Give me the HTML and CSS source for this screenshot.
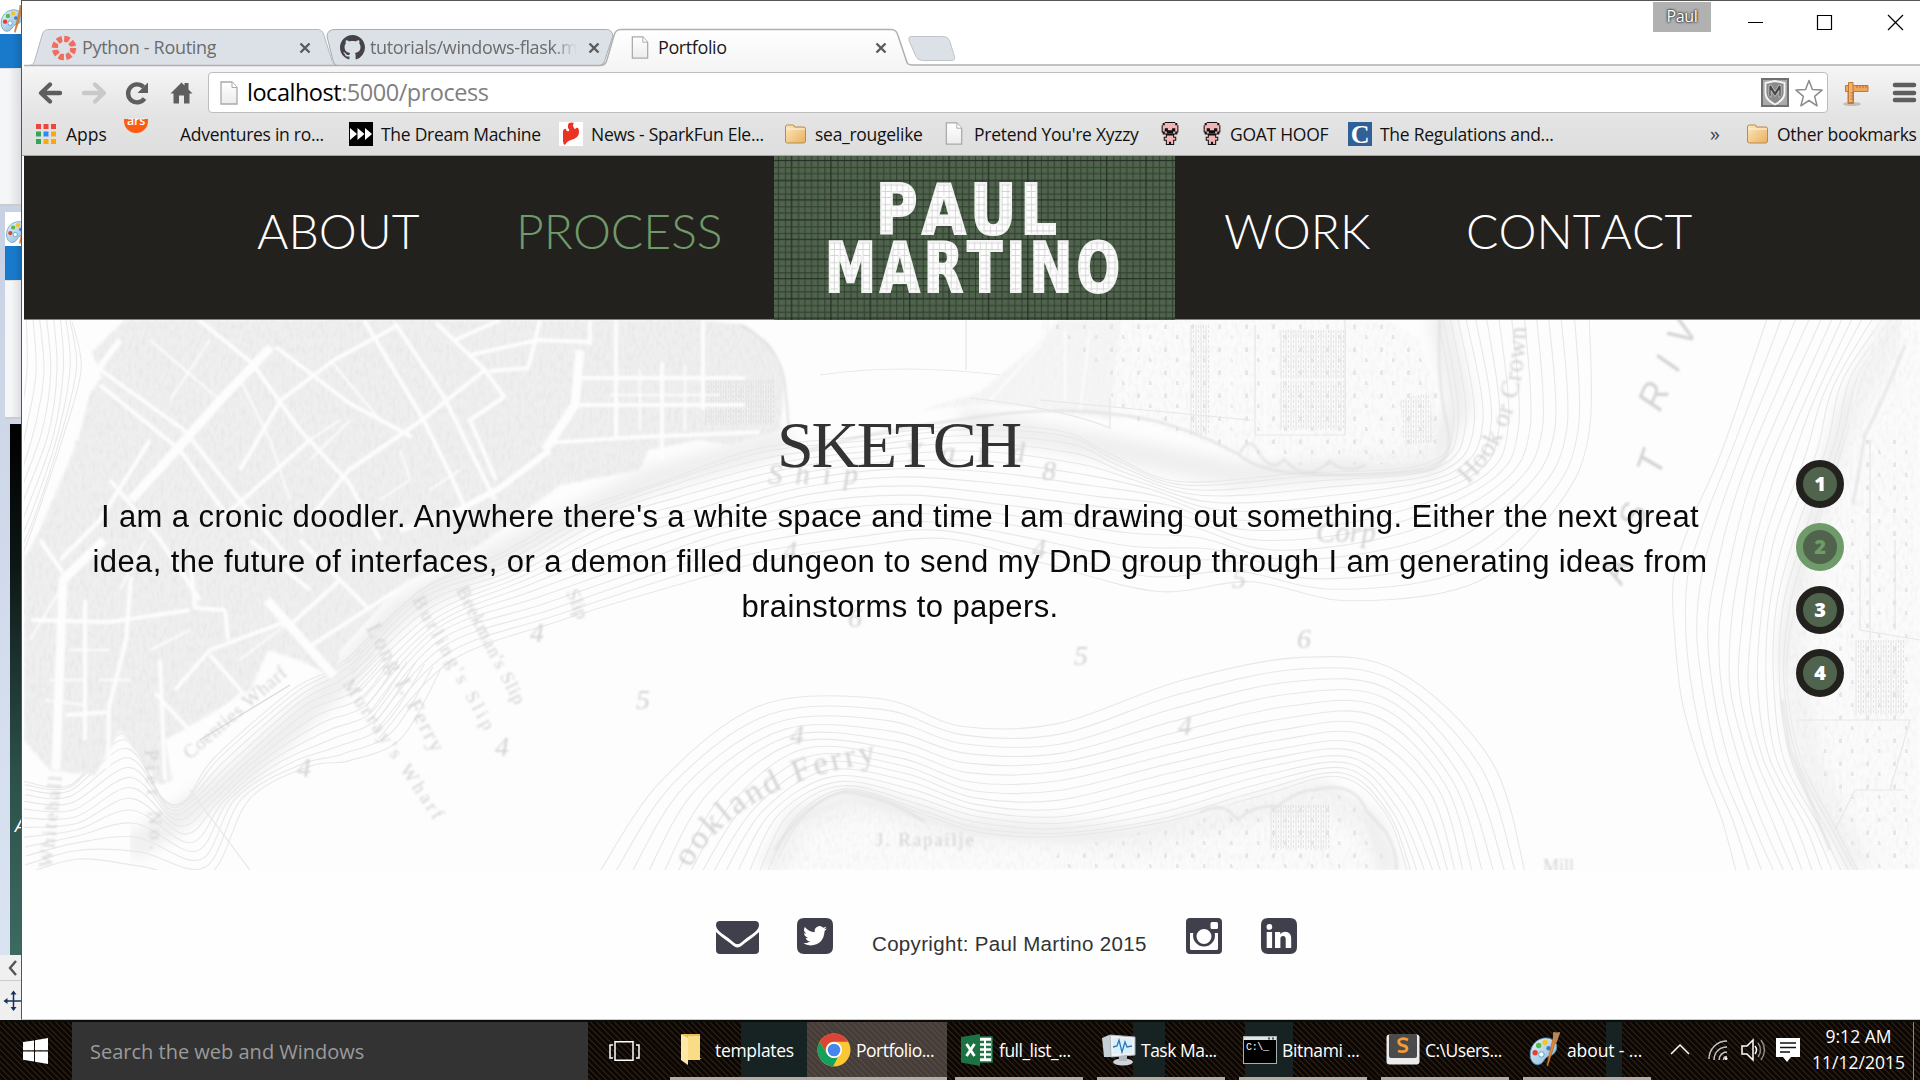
FILE: index.html
```html
<!DOCTYPE html>
<html lang="en">
<head>
<meta charset="utf-8">
<title>Portfolio</title>
<link rel="stylesheet" href="styles.css">
</head>
<body>
<svg class="defs" width="0" height="0" aria-hidden="true">
  <defs>
    <linearGradient id="gFolder" x1="0" y1="0" x2="1" y2="1"><stop offset="0" stop-color="#fde9bb"/><stop offset="1" stop-color="#e9b063"/></linearGradient>
    <linearGradient id="gPage" x1="0" y1="0" x2="0" y2="1"><stop offset="0" stop-color="#fff"/><stop offset="1" stop-color="#ececec"/></linearGradient>
    <linearGradient id="gTab" x1="0" y1="0" x2="0" y2="1"><stop offset="0" stop-color="#fff"/><stop offset="1" stop-color="#f5f5f5"/></linearGradient>
    <linearGradient id="gPal" x1="0" y1="0" x2="1" y2="1"><stop offset="0" stop-color="#e9f5fc"/><stop offset="1" stop-color="#7fb4d6"/></linearGradient>
    <symbol id="page" viewBox="0 0 18 24"><path d="M1 1h11l5 5.5V23H1z" fill="url(#gPage)" stroke="#a9a9a9" stroke-width="1.3"/><path d="M12 1v5.500h5" fill="#fff" stroke="#a9a9a9"/></symbol>
    <symbol id="folder" viewBox="0 0 23 20"><path d="M1.500 3q0-2 2-2h5q2 0 2 2h9q2 0 2 2v12q0 2-2 2h-16q-2 0-2-2z" fill="url(#gFolder)" stroke="#b98b45"/><path d="M2 5h19" stroke="#fff3d6"/></symbol>
    <symbol id="cross" viewBox="0 0 12 12"><path d="M1.500 1.500l9 9M10.500 1.500l-9 9" stroke="currentColor" stroke-width="2.400"/></symbol>
    <symbol id="isaac" viewBox="0 0 18 22"><path d="M4 0h10v1h2v2h1v7h-1v2h-3v2h2v4h-2v4H5v-4H3v-4h2v-2H2v-2H1V3h1V1h2z" fill="#111"/><path d="M4 1h10v2h2v6h-2v2H4V9H2V3h2z" fill="#f3b4b6"/><path d="M4 6h3v2h4V6h3v3h-2v2H6V9H4z" fill="#111"/><path d="M6 13h6v2h2v2h-2v4h-2v-2H8v2H6v-4H4v-2h2z" fill="#f3b4b6"/></symbol>
    <symbol id="palette" viewBox="0 0 36 40"><path d="M16 7C5 9 0 20 2 29c2 8 9 9 13 5 3-3 3-6 7-7 6-1 9-6 9-11 0-6-8-11-15-9z" fill="url(#gPal)" stroke="#5792b8"/><circle cx="11" cy="15" r="3" fill="#57b947"/><circle cx="18" cy="11.500" r="3" fill="#f7c31e"/><circle cx="7" cy="23" r="3" fill="#dc4334"/><circle cx="14" cy="25" r="3" fill="#fff" stroke="#5792b8"/><circle cx="22" cy="18" r="2.500" fill="#3f78c9"/><path d="M33 2l-5 14-7 22-1-1 5-22 3-13z" fill="#e4862c" stroke="#a35a17" stroke-width=".6"/><path d="M27 0q5 1 8 0l-4 12-4-1z" fill="#b98755"/></symbol>
  </defs>
</svg>

<div class="desktop">
  <aside class="behind">
    <div class="b-title"><svg class="pal-back" width="26" height="29"><use href="#palette"/></svg></div>
    <div class="b-ribbon"></div>
    <div class="b-body"></div>
    <div class="b-inner">
      <div class="b-title small"><svg class="pal-in" width="26" height="28"><use href="#palette"/></svg></div>
      <div class="b-ribbon"></div>
      <div class="b-body short"></div>
    </div>
    <div class="b-canvas"><span>A</span></div>
    <div class="b-scroll"><svg width="22" height="25"><path d="M16 6l-6 7 6 7" fill="none" stroke="#555" stroke-width="2.400"/></svg></div>
    <div class="b-status"><svg width="22" height="39"><path d="M5 20h18M13.500 11v18" stroke="#16305c" stroke-width="1.500"/><path d="M3.500 20l4-3v6zM13.500 9.500l-3 4h6zM13.500 30l-3-4h6z" fill="#16305c"/></svg></div>
  </aside>

  <section class="browser">
    <div class="tabstrip">
      <svg class="tabshapes" width="1898" height="68" viewBox="22 0 1898 68">
        <path d="M24 65.500h5c4 0 5-3 6-6l7-24c1-4 3-6 7-6h268c4 0 6 2 7 6l8 25c1 3 2 5 6 5" fill="#dce1e8" stroke="#b4b7bb"/>
        <path d="M337 65.500q-3-1-4-5l-6-24q0-7 8-7h271c4 0 6 2 7 6l-8 24c-1 4-3 6-7 6z" fill="#dce1e8" stroke="#a9adb3"/>
        <path d="M24 68v-2.500h576c4 0 6-2 7-6l7-24c1-4 3-6 7-6h270c4 0 6 2 7 6l8 24c1 4 2 5 6 5H1920V68z" fill="url(#gTab)"/>
        <path d="M24 65.500h576c4 0 6-2 7-6l7-24c1-4 3-6 7-6h270c4 0 6 2 7 6l8 24c1 4 2 5.500 6 5.500H1920" fill="none" stroke="#b0b0b0" stroke-width="1.500"/>
        <path d="M911 36.500h32q5 0 6.500 4l5 16q1 4-3 4h-29q-5 0-6.500-4l-7-16q-1-4 2-4z" fill="#dce1e8" stroke="#c0c4c9"/>
      </svg>
      <div class="tabs">
        <div class="tab t1"><svg width="26" height="26" viewBox="0 0 26 26"><circle cx="13" cy="13" r="9.500" fill="none" stroke="#ee6e62" stroke-width="5.500" stroke-dasharray="5.200 2.260"/><circle cx="13" cy="13" r="7.500" fill="none" stroke="#ee6e62" stroke-width="3" stroke-dasharray="3 2.890"/></svg><span class="tt">Python - Routing</span><svg class="x" width="12" height="12"><use href="#cross"/></svg></div>
        <div class="tab t2"><svg width="25" height="25" viewBox="0 0 16 16"><path fill="#464348" d="M8 0C3.580 0 0 3.580 0 8c0 3.540 2.290 6.530 5.470 7.590.4.070.55-.17.55-.38 0-.19-.01-.82-.01-1.490-2.010.37-2.530-.49-2.690-.94-.09-.23-.48-.94-.82-1.130-.28-.15-.68-.52-.01-.53.63-.01 1.080.58 1.230.82.72 1.210 1.870.87 2.330.66.07-.52.28-.87.51-1.070-1.780-.2-3.640-.89-3.640-3.950 0-.87.31-1.590.82-2.150-.08-.2-.36-1.020.08-2.120 0 0 .67-.21 2.200.82.64-.18 1.320-.27 2-.27s1.360.09 2 .27c1.530-1.040 2.200-.82 2.200-.82.44 1.100.16 1.920.08 2.120.51.56.82 1.270.82 2.150 0 3.070-1.870 3.750-3.650 3.950.29.25.54.73.54 1.480 0 1.070-.01 1.930-.01 2.200 0 .21.15.46.55.38A8.010 8.010 0 0 0 16 8c0-4.420-3.580-8-8-8z"/></svg><span class="tt fade">tutorials/windows-flask.md</span><svg class="x" width="12" height="12"><use href="#cross"/></svg></div>
        <div class="tab t3"><svg width="18" height="23"><use href="#page"/></svg><span class="tt">Portfolio</span><svg class="x" width="12" height="12"><use href="#cross"/></svg></div>
      </div>
      <div class="winctl"><span class="user">Paul</span><svg width="209" height="44" viewBox="1711 1 209 44"><path d="M1748 22.500h15M1817.500 15.500h14v14h-14zM1888 15l15 15M1903 15l-15 15" fill="none" stroke="#000" stroke-width="1.200"/></svg></div>
    </div>

    <div class="toolbar">
      <svg class="navicons" width="186" height="46" viewBox="22 70 186 46" fill="none" stroke="#5e5e5e" stroke-width="4.400" stroke-linejoin="round" stroke-linecap="round">
        <path d="M60 93H42M50 84.500L41 93l9 8.500"/><path d="M84 93h18M95 84.500l9 8.500-9 8.500" stroke="#c9c9c9"/>
        <path d="M144.500 98.500a9 9 0 1 1-1-11.500" stroke-linecap="butt"/><path d="M148 82.500v10.500h-10.500z" fill="#5e5e5e" stroke="none"/>
        <path d="M170.500 93.500L181.500 82.500l3 3v-2.500h4v6.500l4 4h-3V103.500h-5.500v-8h-5v8h-5.500V93.500z" fill="#5e5e5e" stroke="none"/>
      </svg>
      <div class="omnibox"><svg width="18" height="24"><use href="#page"/></svg><span class="url"><b>localhost</b>:5000/process</span>
        <svg class="omni-r" width="64" height="32" viewBox="1760 77 64 32"><path d="M1761 78h28v29h-28z" fill="#707070"/><path d="M1763 80h24v25h-24z" fill="#a9a9a9"/><path d="M1765.500 83l9.500-2 9.500 2v10c0 6-5 9-9.500 11.500-4.500-2.500-9.500-5.500-9.500-11.500z" fill="#8a8a8a" stroke="#f4f4f4" stroke-width="1.800"/><path d="M1769 85.500v10l2 2v-7l4 6 4-6v7l2-2v-10l-2-.5-4 6.500-4-6.500z" fill="#444" stroke="#eee" stroke-width=".6"/><path d="M1809 80.500l3.400 9 9.600.6-7.400 6.300 2.500 9.400-8.100-5.300-8.100 5.300 2.500-9.400-7.400-6.300 9.600-.6z" fill="#fff" stroke="#8c8c8c" stroke-width="1.500" stroke-linejoin="round"/></svg>
      </div>
      <svg width="92" height="46" viewBox="1828 70 92 46"><ellipse cx="1852" cy="104" rx="9" ry="2" fill="#c4bdb5"/><path d="M1845.500 85.500h22.500v6h-14.500v12h-5.500v-12h-2.500z" fill="#eea55c" stroke="#c27936"/><path d="M1848.500 82.500h4.500v20h-4.500z" fill="#f3b26e" stroke="#c27936"/><path d="M1857 85v3M1860 85v3M1863 85v3M1866 85v3M1850.500 93h3M1850.500 96h3M1850.500 99h3" stroke="#a5642b" stroke-width=".8"/><path d="M1895 85h19M1895 93h19M1895 100h19" stroke="#5e5e5e" stroke-width="4.600" stroke-linecap="round"/></svg>
    </div>

    <div class="bookmarks">
      <div class="bm" style="width:88px"><svg width="21" height="20" viewBox="0 0 21 20"><path d="M0 0h5v5H0zM7.500 0h5v5h-5zM15 0h5v5h-5z" fill="#ee453c"/><path d="M0 7.500h5v5H0zM0 15h5v5H0z" fill="#34a457"/><path d="M7.500 7.500h5v5h-5z" fill="#2a8bf2"/><path d="M15 7.500h5v5h-5zM7.500 15h5v5h-5zM15 15h5v5h-5z" fill="#fba90a"/></svg><span class="apps">Apps</span></div>
      <div class="bm ars" style="width:56px"><svg width="24" height="36" viewBox="0 3 24 36"><path d="M0 7h24v2a12 12 0 0 1-24 0z" fill="#ff5a12"/><text x="12" y="13" text-anchor="middle" font-family="Open Sans" font-weight="600" font-size="12.500" fill="#fff">ars</text><path d="M0 0h24v6.500H0z" fill="#e2e2e2"/></svg></div>
      <div class="bm" style="width:169px"><span>Adventures in ro...</span></div>
      <div class="bm" style="width:210px"><svg width="24" height="24" viewBox="0 0 24 24"><path d="M0 0h24v24H0z"/><path d="M1 6l7 6-7 6zM8.500 6l7 6-7 6zM16 6l7 6-7 6z" fill="#fff"/></svg><span>The Dream Machine</span></div>
      <div class="bm" style="width:225px"><svg width="24" height="24" viewBox="0 0 24 24"><path d="M0 0h24v24H0z" fill="#fff"/><path d="M10 1q3-1 5 0-2 2 0 5 1 2 2 0 3-1 3 4 0 6-8 8-4 1-6 5-2-1-2-4V9q1-3 3-2 0 3 3 2 1-1-1-3-1-3 1-5z" fill="#ea3323"/></svg><span>News - SparkFun Ele...</span></div>
      <div class="bm" style="width:161px"><svg width="23" height="20"><use href="#folder"/></svg><span>sea_rougelike</span></div>
      <div class="bm" style="width:215px"><svg width="18" height="23"><use href="#page"/></svg><span class="wide">Pretend You're Xyzzy</span></div>
      <div class="bm" style="width:42px"><svg width="20" height="23"><use href="#isaac"/></svg></div>
      <div class="bm" style="width:146px"><svg width="20" height="23"><use href="#isaac"/></svg><span>GOAT HOOF</span></div>
      <div class="bm" style="width:362px"><svg width="24" height="24" viewBox="0 0 24 24"><path d="M0 0h24v24H0z" fill="#2f6196"/><text x="12" y="21" text-anchor="middle" font-family="Liberation Serif" font-weight="700" font-size="26" fill="#fff">C</text></svg><span>The Regulations and...</span></div>
      <div class="bm more" style="width:36px">»</div>
      <div class="bm"><svg width="23" height="20"><use href="#folder"/></svg><span>Other bookmarks</span></div>
    </div>

    <div class="site">
      <nav class="nav">
        <a class="n1">ABOUT</a><a class="n2 on">PROCESS</a>
        <svg class="logo" width="401" height="164" viewBox="774 156 401 164">
          <defs>
            <pattern id="grid" x="774" y="156" width="39.400" height="39.400" patternUnits="userSpaceOnUse"><path d="M4.500 0v40M11.500 0v40M17.500 0v40M24.500 0v40M31 0v40M37.500 0v40M0 4.500h40M0 11.500h40M0 17.500h40M0 24.500h40M0 31.500h40M0 38h40" stroke="#2b3a2b" stroke-width="1.200" opacity=".8"/><path d="M17.500 0v40M0 4.500h40M0 24.500h40" stroke="#1f2820" stroke-width=".8"/></pattern>
            <pattern id="gridLight" x="774" y="156" width="39.400" height="39.400" patternUnits="userSpaceOnUse"><path d="M0 0h40v40H0z" fill="#fff"/><path d="M4.500 0v40M11.500 0v40M17.500 0v40M24.500 0v40M31 0v40M37.500 0v40M0 4.500h40M0 11.500h40M0 17.500h40M0 24.500h40M0 31.500h40M0 38h40" stroke="#d3d3d3" stroke-width="1"/></pattern>
          </defs>
          <path d="M774 156h401v164H774z" fill="#50644d"/><path d="M774 156h401v164H774z" fill="url(#grid)"/>
          <g font-family="DejaVu Sans Condensed, DejaVu Sans" font-stretch="condensed" font-weight="700" font-size="70" fill="url(#gridLight)" stroke="#f3f3f3" stroke-width="2.200">
            <text transform="translate(876 234) scale(.89 1)" letter-spacing="5" textLength="208" lengthAdjust="spacingAndGlyphs">PAUL</text>
            <text transform="translate(825 292) scale(.89 1)" letter-spacing="5" textLength="336" lengthAdjust="spacingAndGlyphs">MARTINO</text>
          </g>
        </svg>
        <a class="n3">WORK</a><a class="n4">CONTACT</a>
      </nav>

      <main class="hero">
        <svg class="map" id="map" width="1896" height="550" viewBox="24 320 1896 550" aria-hidden="true">
          <defs>
            <pattern id="hatch" width="5" height="5" patternUnits="userSpaceOnUse"><path d="M1 0v5M3.500 0v3" stroke="#dedede" stroke-width=".8"/></pattern>
            <pattern id="rows" width="27" height="23" patternUnits="userSpaceOnUse"><path d="M3 3l3-1v5H3zM15 13h2l1 4h-3z" fill="#e6e6e6"/></pattern>
            <filter id="soft"><feGaussianBlur stdDeviation=".8"/></filter>
            <filter id="edge" x="0" y="0" width="100%" height="100%"><feGaussianBlur stdDeviation="7"/></filter>
            <filter id="grain" x="0" y="0" width="100%" height="100%"><feGaussianBlur in="SourceGraphic" stdDeviation="1.500" result="s"/><feTurbulence type="fractalNoise" baseFrequency=".28 .13" numOctaves="3" seed="4" result="n"/><feColorMatrix in="n" values="0 0 0 0 .76  0 0 0 0 .76  0 0 0 0 .76  1.300 0 0 0 -.53" result="m"/><feComposite in="m" in2="s" operator="in" result="c"/><feMerge><feMergeNode in="s"/><feMergeNode in="c"/></feMerge></filter>
          </defs>
          <g fill="none" stroke="#efefef" stroke-width="26" filter="url(#edge)">
            <path d="M130 850L240 775 330 690 400 610 500 555 650 480 790 440M960 420l160 30 120 25 190-12 30-60-20-90M1900 320l-50 90-40 130-20 110 20 120 50 100M770 870l30-50 60-20 100 30 180 8 180-44 50 30 20 50"/>
          </g>
          <g id="contours" fill="none" stroke="#e8e8e8" stroke-width="1.100" stroke-linejoin="round"></g>
          <g filter="url(#grain)">
            <path id="city" d="M125 320L92 352 102 378 84 400 74 450 40 530 24 560V740L50 770 95 775 120 730 160 785 172 780 165 740 200 720 250 690 268 650 300 660 335 678 340 650 400 585 480 545 540 500 560 485 640 470 648 450 700 440 730 445 780 430 785 380 770 345 745 325 700 320z" fill="#efefef"/>
          </g>
          <g filter="url(#grain)" opacity=".55">
            <path d="M1040 320h350l30 20 20 60-5 60-60 5-30-12-40 8-30-12-30 12-50-22-60-20-80-4z" fill="#fafafa"/>
            <path d="M920 410l60-18 60-50 20-22 60 0-10 100-70-12-60-4z" fill="#f0f0f0"/>
            <path d="M1920 320v550h-60l-24-46-36-64-14-70 8-90 26-80 24-70 10-60 24-70z" fill="#fafafa"/>
            <path d="M770 870l30-46 50-22 60 16 70 20 90 8 90-14 60-26 50-10 40-10 50 24 20 60z" fill="#fafafa"/>
          </g>
          <path d="M1040 320h350l30 20 20 60-5 60-60 5-80 0-160-44z" fill="url(#rows)"/>
          <path d="M1860 440h60v430h-60l-40-100z" fill="url(#rows)"/>
          <path d="M1060 850l180-40 110-20 40 80h-340z" fill="url(#rows)"/>
          <path d="M1280 330h66v100h-66zM1190 325h20v110h-20zM1855 640h50v75h-50zM705 380h70v45h-70zM1400 400l30-8 4 50-30 4zM1270 805h60v45h-60z" fill="url(#hatch)"/>
          <g fill="none" stroke="#fdfdfd" stroke-linejoin="round" filter="url(#soft)">
            <g stroke-width="9"><path d="M271 347L223 397 179 447 131 500"/><path d="M104 540L63 580 56 770"/><path d="M267 600L334 676"/><path d="M580 350L575 405 545 450"/></g>
            <g stroke-width="6"><path d="M550 450L500 488 455 512 400 530"/><path d="M75 440L90 380 120 340"/></g>
            <g stroke-width="4"><path d="M199 320L252 363 300 430 349 483 380 540"/><path d="M364 320L422 417 453 480 470 520"/><path d="M395 323L444 397 480 470 495 500"/><path d="M436 323L485 370 504 397 470 420 496 480"/><path d="M395 327L334 360 281 400 240 470"/><path d="M276 347L349 403 412 437"/><path d="M485 370L422 420 349 470 300 530"/><path d="M87 360L184 430 240 500 290 560"/><path d="M100 385L180 450 230 520"/><path d="M540 320L534 345 528 368 490 371"/><path d="M455 340L500 320M470 355L538 340 590 342M590 320V345"/><path d="M616 320V440M662 362V460M703 320V410M580 378H745M580 405H745M545 443L640 437 760 432"/><path d="M131 577L126 640 109 707 108 770"/><path d="M32 620L110 622 190 610M63 573L40 540M66 715L110 712"/><path d="M290 620L210 650 175 690M397 590L312 645M340 580L290 625M300 540L370 610"/><path d="M155 693L194 735 243 693 210 655"/><path d="M190 555L195 608 225 610 228 640M85 600V740M160 660L165 780"/><path d="M250 540L310 590M220 520L310 440M150 440L100 520 60 560M110 480L160 540 200 600"/></g>
            <g stroke-width="2"><path d="M240 660L285 625M340 420L310 440M150 340L220 400M210 340L170 400M240 380L270 440 290 500M330 360L380 420M310 460L350 420M380 500L410 480 400 450M430 490L460 470M640 370V430M685 365V430M610 395H720M1040 345L990 400M1065 330V400M1090 330L1080 410M1230 320V440M1265 320V450M1210 380H1345"/><path d="M60 590L30 640M70 650H110M100 680H130M145 540L120 590M190 630L150 650M50 680H85M45 700L85 705"/></g>
          </g>
          <g fill="none" stroke="#e0e0e0" stroke-width="2.500" filter="url(#soft)" opacity=".8"><path d="M740 325q40 20 45 60l4 45M1240 453q10-20 20 2 14 18 24 4 22 26 46 2 14 14 36 4"/><path d="M1440 320q-4 60 8 110 6 30-20 40-60 8-120 4-50-2-70-20-60-32-110-38-80-12-170 4-80 10-150 30"/><path d="M1200 812q14-8 28-2l10 10q12-14 40-14 20-16 36-16 40-10 52 20l20 22q12 22 10 38"/><path d="M775 850q30-50 70-58 40 4 80 30"/><path d="M1905 345q-24 60-40 90l-12 70M1830 850l-40-100-8-50"/></g>
          <g fill="none" stroke="#e7e7e7" stroke-width="1.200"><path d="M966 320v50M820 375q80-12 180 0M970 398q90 10 140 30v-30M1040 400l210 20M1345 320v115h-90V325M1860 560v70l60 10M1800 720h110l-20 70M1905 790h-50l-20 40M1870 440v200M1895 540v90M190 790l60 80"/><path d="M200 740l90-55" stroke="#d9d9d9"/></g>
          <g class="labels" filter="url(#soft)" fill="#d2d2d2" font-family="Liberation Serif, serif" font-style="italic">
            <g font-size="36" font-family="Liberation Sans, sans-serif" fill="#d2d2d2"><text transform="translate(1622 585) rotate(-71)" textLength="136">AST</text><text transform="translate(1660 413) rotate(-66)" textLength="180">RIVER</text></g>
            <path id="pHook" d="M1468 484Q1525 430 1526 320" fill="none"/>
            <path id="pFerry" d="M690 868Q740 780 890 760" fill="none"/>
            <text font-size="26" font-style="normal"><textPath href="#pHook" textLength="172">Hook or Crown</textPath></text>
            <text font-size="33" font-style="normal"><textPath href="#pFerry" textLength="222">ookland Ferry</textPath></text>
            <g font-size="28"><text x="1297" y="648">6</text><text x="1074" y="665">5</text><text x="636" y="709">5</text><text x="790" y="744">4</text><text x="1178" y="735">4</text><text x="495" y="756">4</text><text x="530" y="642">4</text><text x="297" y="777">4</text><text x="783" y="560">4</text><text x="848" y="627">6</text><text x="1232" y="588">5</text><text x="1032" y="558">4</text><text x="1042" y="480">8</text></g>
            <text x="768" y="484" font-size="29" textLength="90">Ship</text><text x="905" y="462" font-size="29" textLength="120">Yard</text>
            <text x="1316" y="542" font-size="29">Corp</text>
            <text x="876" y="846" font-size="19" font-style="normal" textLength="98">J. Rapailje</text>
            <text x="1543" y="872" font-size="18" font-style="normal">Mill</text>
            <g font-size="19" font-style="normal"><text transform="translate(366 628) rotate(62)" font-size="22" textLength="142">Long I. Ferry</text><text transform="translate(412 600) rotate(61)" textLength="150">Burling's Slip</text><text transform="translate(456 590) rotate(63)" textLength="130">Beekman's Slip</text><text transform="translate(342 684) rotate(56)" textLength="165">Murray's Wharf</text><text transform="translate(566 592) rotate(68)">Slip</text><text transform="translate(190 760) rotate(-41)" textLength="130">Coenties Wharf</text><text transform="translate(52 868) rotate(-84)" textLength="92">Whitehall</text><text transform="translate(145 750) rotate(87)" textLength="100">Pier No.</text></g>
          </g>
        </svg>
        <div class="copy">
          <h1>SKETCH</h1>
          <p>I am a cronic doodler. Anywhere there's a white space and time I am drawing out something. Either the next great<br>idea, the future of interfaces, or a demon filled dungeon to send my DnD group through I am generating ideas from<br>brainstorms to papers.</p>
        </div>
        <ol class="dots"><li>1</li><li class="on">2</li><li>3</li><li>4</li></ol>
      </main>

      <footer class="foot">
        <svg width="43" height="33" viewBox="0 0 43 33" class="f1"><path d="M4 0h35q4 0 4 4 0 4-5 8-8 5-13 10-3.500 2.500-7 0Q13 17 5 12 0 8 0 4q0-4 4-4z"/><path d="M0 11q4 4 14 11 5 4.500 7.500 4.500t7.500-4.500q10-7 14-11v18q0 4-4 4H4q-4 0-4-4z"/><path d="M0 9q5 5 13 10 6 5.500 8.500 5.500T30 19q8-5 13-10" fill="none" stroke="#fefefe" stroke-width="2"/></svg>
        <svg width="36" height="36" viewBox="0 0 36 36" class="f2"><path fill-rule="evenodd" d="M7 0h22q7 0 7 7v22q0 7-7 7H7q-7 0-7-7V7q0-7 7-7zM30 10.500q-1.300.6-2.800.8 1.500-1 2.100-2.700-1.400.8-3.100 1.200a4.900 4.900 0 0 0-8.400 4.400q-6-.3-10-5.100-2.200 4 1.500 6.500-1.200 0-2.200-.6.100 3.800 3.900 4.800-1 .3-2.200.1 1 3.300 4.600 3.400-3 2.400-7.200 2 3.300 2.100 7.500 2.100 13-.8 13.900-14.400 1.500-1.100 2.400-2.500z"/></svg>
        <span class="copyright">Copyright: Paul Martino 2015</span>
        <svg width="36" height="36" viewBox="0 0 36 36" class="f3"><path fill-rule="evenodd" d="M4 0h28q4 0 4 4v28q0 4-4 4H4q-4 0-4-4V4q0-4 4-4zM26 4q-1.500 0-1.500 1.500v4q0 1.500 1.500 1.500h4.500q1.500 0 1.500-1.500v-4Q32 4 30.500 4zM4 15v15.500Q4 32 5.500 32h25q1.500 0 1.500-1.500V15h-3.300a11 11 0 1 1-21.400 0zM18 11a7.500 7.500 0 1 0 0 15 7.500 7.500 0 0 0 0-15z"/></svg>
        <svg width="36" height="36" viewBox="0 0 36 36" class="f4"><path fill-rule="evenodd" d="M7 0h22q7 0 7 7v22q0 7-7 7H7q-7 0-7-7V7q0-7 7-7zM8.400 6a2.800 2.800 0 1 0 0 5.800 2.800 2.800 0 0 0 0-5.800zM5.700 14v16h5.400V14zM14 14v16h5.400v-9q0-3 2.800-3 2.500 0 2.500 3.600V30h5.500v-9.300q0-7-6.200-7-3.300 0-4.700 2.600V14z"/></svg>
      </footer>
    </div>
  </section>
</div>

<div class="taskbar">
  <div class="start"><svg width="26" height="26" viewBox="0 0 26 26"><path d="M0 4l11-1.600V12.300H0zM12 2.200L25 0v12.300H12zM0 13.500h11v9.900L0 21.800zM12 13.500h13V26l-13-2.200z" fill="#fff"/></svg></div>
  <div class="search">Search the web and Windows</div>
  <div class="view"><svg width="31" height="20" viewBox="0 0 31 20" fill="none" stroke="#fff" stroke-width="1.500"><path d="M6 .8h18v18.400H6zM4 4H1v13h3M27 4h3v13h-3"/></svg></div>
  <div class="task k1"><svg width="24" height="32" viewBox="0 0 24 32"><path d="M2 0h18v24l2 1H8z" fill="#e7bd56"/><path d="M8 2h12v24H8z" fill="#f8dc86"/><path d="M1 0l7 4v27l-7-5z" fill="#fce9a9"/></svg><span>templates</span></div>
  <div class="task k2 active"><svg width="34" height="34" viewBox="-17 -17 34 34"><circle r="16.500" fill="#fbc834"/><path d="M-14.300 -8.200A16.500 16.500 0 0 1 14.300 -8.200H0A8 8 0 0 0 -7 4z" fill="#db4437"/><path d="M-14.300 -8.200L-7 4A8 8 0 0 0 4 7L-1 16.500A16.500 16.500 0 0 1 -14.300 -8.200z" fill="#15a05d"/><circle r="8" fill="#fff"/><circle r="6.300" fill="#4684ee"/></svg><span>Portfolio...</span></div>
  <div class="task k3"><svg width="33" height="32" viewBox="0 0 33 32"><path d="M14 3h17v25H14z" fill="#fff" stroke="#1f7346" stroke-width="1.500"/><path d="M18 8h5M25 8h5M18 13h5M25 13h5M18 18h5M25 18h5M18 23h5M25 23h5" stroke="#1f7346" stroke-width="2.600"/><path d="M0 3L19 0v32L0 28.500z" fill="#1d7244"/><path d="M5.500 10l8 12M13.500 10l-8 12" stroke="#fff" stroke-width="2.800"/></svg><span>full_list_...</span></div>
  <div class="task k4"><svg width="35" height="32" viewBox="0 0 35 32"><path d="M1 4l7-3h8v22H3z" fill="#c8d0d7"/><path d="M9 1l25 2v18l-24 2z" fill="#eef2f5" stroke="#aab4bd"/><path d="M12 4l19 1v14l-19 1z" fill="#dbeefb"/><path d="M12 13l4-1 2-6 3 12 3-10 2 5 5-1" fill="none" stroke="#2b78b6" stroke-width="1.300"/><ellipse cx="22" cy="28" rx="10" ry="3.500" fill="#cfd5da"/><path d="M18 22h8v5h-8z" fill="#b1b9c0"/></svg><span>Task Ma...</span></div>
  <div class="task k5"><svg width="34" height="28" viewBox="0 0 34 28"><path d="M0 0h34v28H0z" fill="#a8b0b6"/><path d="M1 4h32v23H1z"/><path d="M1 1h32v3H1z" fill="#dfe4e8"/><path d="M25 1.500h2v2h-2zM29 1.500h2v2h-2z" fill="#555"/><text x="3" y="14" font-family="Liberation Mono" font-size="10" fill="#fff">C:\_</text></svg><span>Bitnami ...</span></div>
  <div class="task k6"><svg width="34" height="31" viewBox="0 0 34 31"><rect x=".5" y=".5" width="33" height="30" rx="3" fill="#ececec"/><rect x="3" y="0" width="28" height="24" rx="2" fill="#4b4b4b"/><path d="M22 6q-4-2-7-1-3 1-2 4 1 2 4 2.500 4 .5 4 3.500-1 4-9 2" fill="none" stroke="#f59a35" stroke-width="2.800"/></svg><span>C:\Users...</span></div>
  <div class="task k7"><svg width="36" height="36"><use href="#palette"/></svg><span>about - ...</span></div>
  <svg class="tray" width="150" height="58" viewBox="1660 1022 150 58" fill="none" stroke="#fff" stroke-width="1.500"><path d="M1671 1054l9-9 9 9"/><path d="M1709 1059c0-10 8-18 18-18M1714 1060c0-8 6-13 13-13M1719 1060c0-5 4-8 8-8M1723.500 1060c0-2 1.500-3.500 3.500-3.500" opacity=".75"/><circle cx="1726" cy="1058.500" r="1.500" fill="#fff" stroke="none"/><path d="M1742 1046h5l6-6v20l-6-6h-5zM1755 1046q3 4 0 8"/><path d="M1758 1043q5 7 0 14M1761 1040q7 10 0 20" opacity=".5"/><path d="M1776 1038h24v19h-9l-4 5-4-5h-7z" fill="#fff" stroke="none"/><path d="M1780 1043h16M1780 1047.500h16M1780 1052h10" stroke="#111"/></svg>
  <div class="clock"><span class="time">9:12 AM</span><span class="date">11/12/2015</span></div>
</div>
<script src="map.js"></script>
</body>
</html>
```
FILE: styles.css
```css
* { box-sizing: border-box; }
body { margin: 0; width: 1920px; height: 1080px; overflow: hidden; background: #000; font-family: "Open Sans", "Noto Sans", sans-serif; display: flex; flex-direction: column; }
svg { display: block; flex: none; }
.defs { position: absolute; }
.desktop { display: flex; height: 1020px; }

/* sliver of the windows behind the browser */
.behind { width: 21px; flex: none; overflow: hidden; background: linear-gradient(#c3cde0, #dbe5f3); display: flex; flex-direction: column; }
.b-title { height: 34px; background: #fff; padding-top: 5px; overflow: hidden; flex: none; }
.b-ribbon { height: 34px; background: linear-gradient(90deg, #1979ca 60%, #156bb4); flex: none; }
.b-body { height: 138px; background: linear-gradient(90deg, #f5f6f8 40%, #dcdee1); border-top: 1px solid #ddd; border-bottom: 2px solid #ccc; flex: none; }
.b-inner { margin: 6px 0 0 5px; flex: none; }
.b-body.short { height: 139px; }
.b-canvas { margin: 5px 0 0 10px; height: 531px; background: linear-gradient(#000, #0b1513 25%, #2c4f49 65%, #3d6a62); color: #fff; font-size: 18px; font-style: italic; padding: 389px 0 0 5px; flex: none; }
.b-scroll { height: 26px; background: #f0f0f0; border-bottom: 1px solid #ccc; flex: none; }
.b-status { flex: 1; background: #efefef; }

.browser { flex: 1; border-left: 1px solid #555; border-top: 1px solid #555; border-bottom: 1px solid #ccc; background: #fff; display: flex; flex-direction: column; overflow: hidden; }
.tabstrip { height: 67px; position: relative; flex: none; display: flex; justify-content: space-between; align-items: flex-start; }
.tabshapes { position: absolute; left: 0; top: -1px; }
.tabs { position: relative; display: flex; padding-top: 27px; }
.tab { display: flex; align-items: center; height: 39px; font-size: 18px; color: #6c6c6c; letter-spacing: -.3px; }
.tab .x { color: #5b5b5b; margin-left: auto; }
.tt { white-space: nowrap; overflow: hidden; margin: -1px 0 0 5px; }
.t1 { width: 289px; padding-left: 29px; }
.t2 { width: 289px; padding-left: 29px; }
.t3 { width: 287px; padding-left: 31px; color: #1a1a1a; }
.t3 .tt { margin-left: 9px; letter-spacing: -.4px; }
.fade { width: 207px; letter-spacing: -.35px; -webkit-mask-image: linear-gradient(90deg, #000 88%, transparent); mask-image: linear-gradient(90deg, #000 88%, transparent); }
.winctl { display: flex; position: relative; }
.user { width: 58px; height: 30px; margin-top: 1px; background: #b1b1b1; color: #fff; font-size: 16px; text-align: center; line-height: 29px; text-shadow: 0 0 2px #333, 0 0 2px #333, 0 0 3px #555; letter-spacing: -.4px; }

.toolbar { height: 47px; flex: none; display: flex; background: linear-gradient(#f5f5f5, #e4e4e4); padding-top: 2px; }
.omnibox { width: 1620px; height: 41px; margin-top: 2px; background: #fff; border: 1.500px solid #bdbdbd; border-radius: 4px; display: flex; align-items: center; padding: 0 3px 0 11px; flex: none; }
.url { margin: -2px 0 0 9px; font-size: 23.500px; color: #7f7f7f; letter-spacing: -.48px; }
.url b { font-weight: 400; color: #000; }
.omni-r { margin-left: auto; }

.bookmarks { height: 41px; flex: none; background: linear-gradient(#e4e4e4, #dedede); border-bottom: 1px solid #a5a5a5; display: flex; align-items: center; padding-left: 14px; padding-bottom: 3px; font-size: 17.500px; color: #111; letter-spacing: -.27px; }
.bm { display: flex; align-items: center; flex: none; height: 37px; white-space: nowrap; }
.bm svg + span { margin-left: 8px; }
.bm svg + .apps { margin-left: 9px; letter-spacing: 0; }
.bm svg + .wide { margin-left: 11px; }
.ars { align-items: flex-start; }
.more { font-size: 20px; color: #444; }

.site { margin-left: 2px; flex: 1; display: flex; flex-direction: column; background: #fff; }
.nav { height: 164px; flex: none; background: #22211d; border-bottom: 1px solid #8a8482; display: flex; color: #fff; font-family: Lato, sans-serif; font-weight: 300; font-size: 48px; line-height: 58px; font-kerning: none; }
.nav a { padding-top: 46px; white-space: nowrap; }
.nav .on { color: #6f9a6a; }
.n1 { width: 259px; margin-left: 233px; }
.n2 { width: 258px; }
.n3 { width: 242px; margin-left: 49px; }

.hero { height: 550px; position: relative; flex: none; background: #fdfdfd; display: flex; overflow: hidden; }
.map { position: absolute; inset: 0; }
.copy { position: relative; width: 1752px; text-align: center; padding-top: 86px; }
h1 { margin: 0; font: 400 66px/78px "Liberation Serif", serif; color: #333; letter-spacing: -2.300px; padding-right: 3px; }
p { margin: 10px 0 0; font: 31px/45px "Liberation Sans", sans-serif; letter-spacing: .4px; color: #0a0a0a; white-space: nowrap; }
.dots { list-style: none; margin: 140px 0 0 20px; padding: 0; position: relative; display: flex; flex-direction: column; gap: 15px; }
.dots li { width: 48px; height: 48px; border: 7.500px solid #22211d; border-radius: 50%; background: #50644d; color: #fff; font-weight: 800; font-size: 20px; line-height: 33px; text-align: center; }
.dots .on { border-color: #6f9a6a; color: #6f9a6a; }

.foot { flex: 1; display: flex; align-items: flex-start; fill: #403f4c; padding: 48px 0 0 692px; background: #fefefe; }
.f1 { margin-top: 3px; }
.f2 { margin-left: 38px; }
.f3 { margin-left: 39px; }
.f4 { margin-left: 39px; }
.copyright { width: 275px; margin: 14px 0 0 39px; font: 20.500px/24px "Liberation Sans", sans-serif; letter-spacing: .33px; color: #333; white-space: nowrap; }

.taskbar { height: 60px; display: flex; color: #fff; background: repeating-linear-gradient(45deg, #291b10 0 1.400px, #0a0705 1.400px 4.200px); border-top: 2px solid #0b0d0c; font-size: 17.500px; }
.start { width: 72px; padding: 16px 0 0 23px; flex: none; }
.search { width: 516px; background: #333; color: #9b9b9b; font-size: 20px; line-height: 59px; padding-left: 18px; flex: none; }
.view { width: 82px; padding: 19px 0 0 21px; flex: none; }
.task { width: 128px; margin-right: 14px; height: 58px; border-bottom: 3px solid #b2aba6; display: flex; align-items: center; flex: none; white-space: nowrap; letter-spacing: -.5px; }
.task svg + span { margin-left: 5px; }
.k1 { width: 137px; padding-left: 10px; margin-right: 0; letter-spacing: -.3px; background: linear-gradient(90deg, transparent 71px, #172322 71px); }
.k1 svg + span { margin-left: 11px; }
.k2 { width: 140px; margin-right: 8px; padding-left: 10px; }
.active { background: rgba(125,115,110,.5); }
.k3 { padding-left: 6px; }
.k4 { padding-left: 4px; background: linear-gradient(90deg, transparent 36px, #172322 36px 68px, transparent 68px); }
.k5 { padding-left: 4px; letter-spacing: -.35px; background: linear-gradient(90deg, transparent 6px, #172322 6px 54px, transparent 54px); }
.k6 { padding-left: 5px; }
.k7 { padding-left: 4px; margin-right: 9px; letter-spacing: -.1px; background: linear-gradient(90deg, transparent 83px, #172322 83px 99px, transparent 99px); }
.k7 svg + span { margin-left: 4px; }
.clock { width: 104px; border-right: 1px solid #8b8580; display: flex; flex-direction: column; align-items: center; line-height: 26px; padding: 1px 6px 0 0; }
.date { letter-spacing: 0; }
```
FILE: map.js
```js
// Depth contours: each family is a set of curves blended between two shorelines.
const families = [
  [[[72,320],[80,370],[64,440],[34,520],[20,560]], [[26,310],[26,370],[22,420],[12,470],[0,500]], 9],
  [[[345,660],[420,590],[500,556],[580,508],[660,482],[760,450],[860,436],[960,425],[1060,432],[1110,455],[1180,480],[1300,474],[1425,465],[1455,420],[1436,315]],
   [[380,740],[450,660],[560,620],[680,586],[760,562],[860,545],[950,540],[1050,566],[1160,590],[1250,582],[1350,602],[1480,580],[1560,500],[1590,430],[1590,315]], 15],
  [[[24,780],[70,785],[125,735],[160,795],[185,800],[215,760],[290,690],[330,670],[360,650]],
   [[24,875],[80,860],[140,865],[210,875],[250,800],[310,765],[350,760],[400,740],[440,670]], 13],
  [[[770,875],[800,820],[850,792],[920,812],[980,832],[1060,838],[1160,822],[1260,795],[1340,778],[1385,815],[1410,875]],
   [[600,875],[660,780],[760,705],[880,700],[960,726],[1060,722],[1180,682],[1300,658],[1400,670],[1490,760],[1525,875]], 15],
  [[[1905,315],[1865,370],[1850,430],[1818,520],[1796,600],[1788,680],[1800,760],[1838,830],[1860,875]],
   [[1770,315],[1722,450],[1690,520],[1675,580],[1674,640],[1682,700],[1700,760],[1720,820],[1738,875]], 14]
];
const group = document.getElementById('contours');
for (const [a, b, n] of families) {
  for (let i = 0; i < n; i++) {
    const t = Math.pow(i / (n - 1), 1.3);
    const p = a.map((q, k) => [
      q[0] + (b[k][0] - q[0]) * t + Math.sin(k * 2.3 + i * .8) * 1.5,
      q[1] + (b[k][1] - q[1]) * t + Math.cos(k * 1.9 + i * .7) * 1.5
    ]);
    let d = `M${p[0]}`;
    for (let k = 0; k < p.length - 1; k++) {
      const p0 = p[k - 1] || p[k], p1 = p[k], p2 = p[k + 1], p3 = p[k + 2] || p2;
      d += `C${p1[0] + (p2[0] - p0[0]) / 6},${p1[1] + (p2[1] - p0[1]) / 6} ${p2[0] - (p3[0] - p1[0]) / 6},${p2[1] - (p3[1] - p1[1]) / 6} ${p2}`;
    }
    const path = document.createElementNS('http://www.w3.org/2000/svg', 'path');
    path.setAttribute('d', d);
    group.appendChild(path);
  }
}
```
